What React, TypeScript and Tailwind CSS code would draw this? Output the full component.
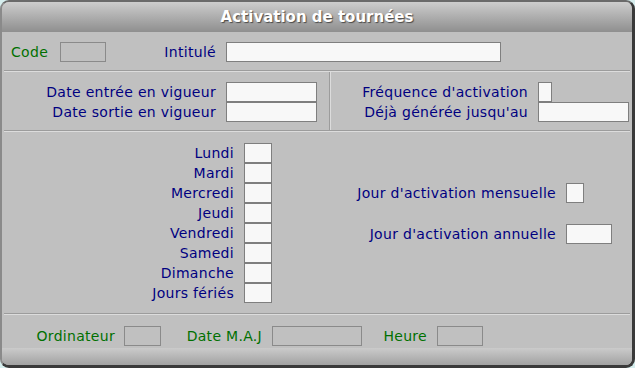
const box = "h-[20px] border border-[#7f7f7f] bg-[#f8f8f8]"
const dim = "h-[20px] border border-[#8a8a8a] bg-[#c0c0c0]"

const Sep = () => (
  <div className="mx-[2px] h-[2px] border-t border-[#9c9c9c] bg-[#dcdcdc]" />
)

const days = ["Lundi", "Mardi", "Mercredi", "Jeudi", "Vendredi", "Samedi", "Dimanche", "Jours fériés"]

export default function App() {
  return (
    <div className="w-[635px] h-[368px] bg-[#d6eeee] font-['DejaVu_Sans',sans-serif] text-[14px] tracking-[0.3px] leading-none">
      <div className="w-full h-full flex flex-col rounded-[9px] overflow-hidden border-l-2 border-t-2 border-r-[3px] border-b-[3px] border-l-[#8a8a8a] border-t-[#6a6a6a] border-r-[#3a3a3a] border-b-[#3a3a3a] bg-[#c0c0c0]">
        {/* title */}
        <div className="h-[30px] shrink-0 flex items-center justify-center bg-gradient-to-b from-[#cdcdcd] to-[#8f8f8f]">
          <span className="text-white font-bold text-[15px] tracking-normal [text-shadow:1px_1px_1px_#4a4a4a]">
            Activation de tournées
          </span>
        </div>

        {/* code / intitulé */}
        <div className="h-[38px] flex items-center pl-[9px] pt-[1px]">
          <span className="w-[49px] text-[#007000]">Code</span>
          <div className={`${dim} w-[46px]`} />
          <span className="w-[120px] pr-[10px] text-right text-[#000080]">Intitulé</span>
          <div className={`${box} w-[275px]`} />
        </div>
        <Sep />

        {/* dates */}
        <div className="h-[58px] flex">
          <div className="w-[327px] flex flex-col pt-[10px]">
            <div className="flex items-center">
              <span className="w-[224px] pr-[10px] text-right text-[#000080]">Date entrée en vigueur</span>
              <div className={`${box} w-[91px]`} />
            </div>
            <div className="flex items-center">
              <span className="w-[224px] pr-[10px] text-right text-[#000080]">Date sortie en vigueur</span>
              <div className={`${box} w-[91px]`} />
            </div>
          </div>
          <div className="w-[2px] border-l border-[#9c9c9c] bg-[#dcdcdc]" />
          <div className="flex-1 flex flex-col pt-[10px]">
            <div className="flex items-center">
              <span className="w-[207px] pr-[10px] text-right text-[#000080]">Fréquence d'activation</span>
              <div className={`${box} w-[14px]`} />
            </div>
            <div className="flex items-center">
              <span className="w-[207px] pr-[10px] text-right text-[#000080]">Déjà générée jusqu'au</span>
              <div className={`${box} w-[91px]`} />
            </div>
          </div>
        </div>
        <Sep />

        {/* jours */}
        <div className="h-[181px] flex">
          <div className="flex flex-col pt-[11px]">
            {days.map((d) => (
              <div key={d} className="flex items-center">
                <span className="w-[242px] pr-[10px] text-right text-[#000080]">{d}</span>
                <div className={`${box} w-[28px]`} />
              </div>
            ))}
          </div>
          <div className="flex flex-col pt-[51px] gap-[21px]">
            <div className="flex items-center">
              <span className="w-[294px] pr-[10px] text-right text-[#000080]">Jour d'activation mensuelle</span>
              <div className={`${box} w-[18px]`} />
            </div>
            <div className="flex items-center">
              <span className="w-[294px] pr-[10px] text-right text-[#000080]">Jour d'activation annuelle</span>
              <div className={`${box} w-[46px]`} />
            </div>
          </div>
        </div>
        <Sep />

        {/* footer info */}
        <div className="h-[33px] pt-[11px]">
          <div className="flex items-center">
            <span className="w-[122px] pr-[9px] text-right text-[#007000]">Ordinateur</span>
            <div className={`${dim} w-[37px]`} />
            <span className="w-[111px] pr-[10px] text-right text-[#007000]">Date M.A.J</span>
            <div className={`${dim} w-[90px]`} />
            <span className="w-[75px] pr-[10px] text-right text-[#007000]">Heure</span>
            <div className={`${dim} w-[46px]`} />
          </div>
        </div>

        <div className="flex-1 bg-gradient-to-b from-[#cbcbcb] to-[#a2a2a2]" />
      </div>
    </div>
  )
}
